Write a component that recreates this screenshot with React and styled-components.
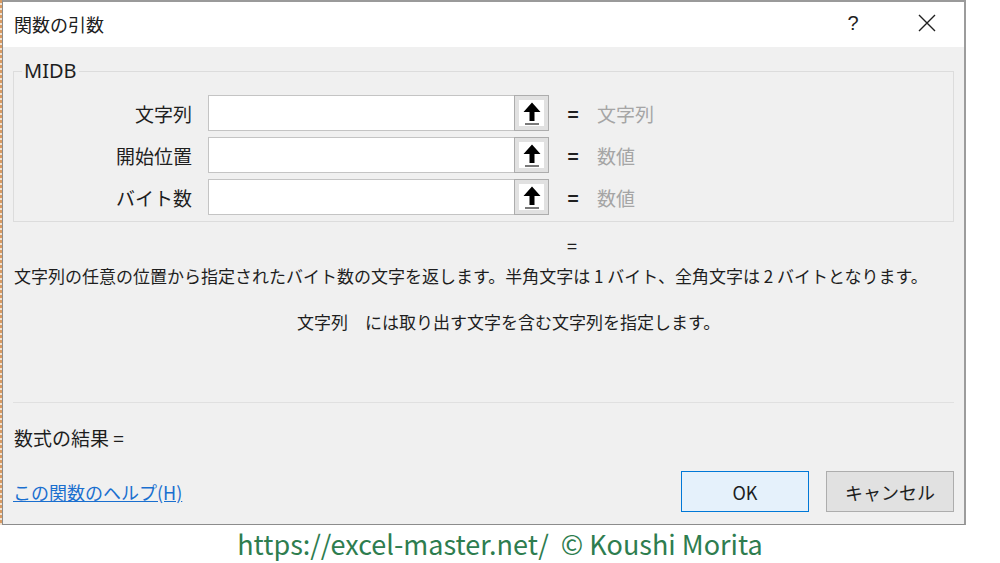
import React from 'react'
import styled, { createGlobalStyle } from 'styled-components'

const GlobalStyle = createGlobalStyle`
    html, body {
        margin: 0;
        padding: 0;
        background: #ffffff;
    }
    body {
        font-family: "Noto Sans CJK JP", "Noto Sans", sans-serif;
        color: #1e1e1e;
    }
`

const Page = styled.div`
    width: 1000px;
    height: 563px;
    display: flex;
    flex-direction: column;
    overflow: hidden;
    background: #ffffff;
`

const Top = styled.div`
    display: flex;
    flex-direction: row;
    height: 525px;
`

const Edge = styled.div`
    width: 2px;
    background: repeating-linear-gradient(
        to bottom,
        #d99b62 0px,
        #d99b62 3px,
        #f3e2d0 3px,
        #f3e2d0 5px
    );
`

const Dialog = styled.div`
    width: 961px;
    display: flex;
    flex-direction: column;
    border: 1px solid #8c8c8c;
    border-top: 2px solid #9a9a9a;
    border-right: 2px solid #9c9c9c;
`

const TitleBar = styled.div`
    height: 45px;
    background: #ffffff;
    display: flex;
    align-items: center;
    padding-left: 11px;
    padding-right: 27px;
    flex-shrink: 0;
`

const Title = styled.div`
    font-size: 18px;
    flex: 1;
    color: #202020;
    margin-top: -2px;
`

const HelpMark = styled.div`
    font-size: 20px;
    width: 20px;
    text-align: center;
    margin-right: 54px;
    margin-top: -2px;
    font-family: "Liberation Sans", sans-serif;
`

const CloseBox = styled.div`
    width: 20px;
    height: 20px;
    display: flex;
    align-items: center;
    justify-content: center;
    margin-top: -3px;
`

const Body = styled.div`
    flex: 1;
    background: #f0f0f0;
    display: flex;
    flex-direction: column;
    padding: 0 10px 0 10px;
`

const Group = styled.fieldset`
    margin: 12px 0 0 0;
    border: 1px solid #dcdcdc;
    padding: 12px 0 6px 0;
    display: flex;
    flex-direction: column;
    gap: 6px;
    min-width: 0;
`

const Legend = styled.legend`
    font-size: 20px;
    padding: 0 2px;
    margin-left: 8px;
    line-height: 24px;
    color: #1e1e1e;
    font-family: "Noto Sans", sans-serif;
`

const ArgRow = styled.div`
    display: flex;
    align-items: center;
    height: 36px;
`

const Label = styled.div`
    width: 178px;
    font-size: 19px;
    text-align: right;
`

const Field = styled.div`
    margin-left: 16px;
    width: 305px;
    height: 34px;
    background: #ffffff;
    border: 1px solid #c4c4c4;
    border-right: none;
`

const PickButton = styled.div`
    width: 33px;
    height: 34px;
    border: 1px solid #adadad;
    background: #e1e1e1;
    display: flex;
    align-items: center;
    justify-content: center;
`

const PickInner = styled.div`
    width: 25px;
    height: 26px;
    background: #ffffff;
    display: flex;
    align-items: center;
    justify-content: center;
`

const Eq = styled.div`
    margin-left: 18px;
    width: 12px;
    font-size: 19px;
    font-weight: bold;
    text-align: center;
    color: #202020;
`

const Value = styled.div`
    margin-left: 18px;
    font-size: 19px;
    color: #a5a5a5;
`

const EqLine = styled.div`
    font-size: 18px;
    line-height: 22px;
    height: 22px;
    margin-top: 12px;
    padding-left: 554px;
`

const Description = styled.div`
    font-size: 17px;
    line-height: 22px;
    margin-top: 9px;
    padding-left: 1px;
    white-space: nowrap;
`

const ArgHelp = styled.div`
    font-size: 17px;
    line-height: 22px;
    margin-top: 24px;
    padding-left: 284px;
    white-space: nowrap;
`

const Separator = styled.div`
    margin-top: 69px;
    border-top: 1px solid #e0e0e0;
`

const Result = styled.div`
    font-size: 19px;
    line-height: 24px;
    margin-top: 23px;
    padding-left: 1px;
`

const Footer = styled.div`
    display: flex;
    align-items: center;
    margin-top: 21px;
`

const HelpLink = styled.a`
    font-size: 18px;
    color: #1a6fcf;
    text-decoration: underline;
    flex: 1;
    margin-top: 1px;
    cursor: pointer;
`

const Button = styled.div`
    width: 126px;
    height: 39px;
    display: flex;
    align-items: center;
    justify-content: center;
    font-size: 18px;
    border: 1px solid ${({ primary }) => (primary ? '#0078d7' : '#adadad')};
    background: ${({ primary }) => (primary ? '#e5f1fb' : '#e1e1e1')};
    margin-left: ${({ gapLeft }) => gapLeft || 0}px;
`

const Credit = styled.div`
    flex: 1;
    display: flex;
    align-items: center;
    justify-content: center;
    font-size: 27px;
    color: #2e7d4f;
    font-family: "Noto Sans CJK JP", "Noto Sans", sans-serif;
    white-space: pre;
    margin-top: -2px;
`

const UpArrow = () => (
    <svg width="22" height="25" viewBox="0 0 22 25">
        <path d="M11 1.5 L2.5 11 L8.5 11 L8.5 20 L13.5 20 L13.5 11 L19.5 11 Z" fill="#000" />
        <rect x="4" y="22" width="14" height="2" fill="#7a7a7a" />
    </svg>
)

const CloseIcon = () => (
    <svg width="18" height="18" viewBox="0 0 18 18">
        <path d="M1 1 L17 17 M17 1 L1 17" stroke="#202020" strokeWidth="1.4" fill="none" />
    </svg>
)

const args = [
    { label: '文字列', value: '文字列' },
    { label: '開始位置', value: '数値' },
    { label: 'バイト数', value: '数値' },
]

const App = () => {
    return (
        <Page>
            <GlobalStyle />
            <Top>
                <Edge />
                <Dialog>
                    <TitleBar>
                        <Title>関数の引数</Title>
                        <HelpMark>?</HelpMark>
                        <CloseBox><CloseIcon /></CloseBox>
                    </TitleBar>
                    <Body>
                        <Group>
                            <Legend>MIDB</Legend>
                            {args.map((a) => (
                                <ArgRow key={a.label}>
                                    <Label>{a.label}</Label>
                                    <Field />
                                    <PickButton>
                                        <PickInner><UpArrow /></PickInner>
                                    </PickButton>
                                    <Eq>=</Eq>
                                    <Value>{a.value}</Value>
                                </ArgRow>
                            ))}
                        </Group>
                        <EqLine>=</EqLine>
                        <Description>
                            文字列の任意の位置から指定されたバイト数の文字を返します。半角文字は 1 バイト、全角文字は 2 バイトとなります。
                        </Description>
                        <ArgHelp>文字列　には取り出す文字を含む文字列を指定します。</ArgHelp>
                        <Separator />
                        <Result>数式の結果 =</Result>
                        <Footer>
                            <HelpLink>この関数のヘルプ(H)</HelpLink>
                            <Button primary>OK</Button>
                            <Button gapLeft={17}>キャンセル</Button>
                        </Footer>
                    </Body>
                </Dialog>
            </Top>
            <Credit>https://excel-master.net/  © Koushi Morita</Credit>
        </Page>
    )
}

export default App
